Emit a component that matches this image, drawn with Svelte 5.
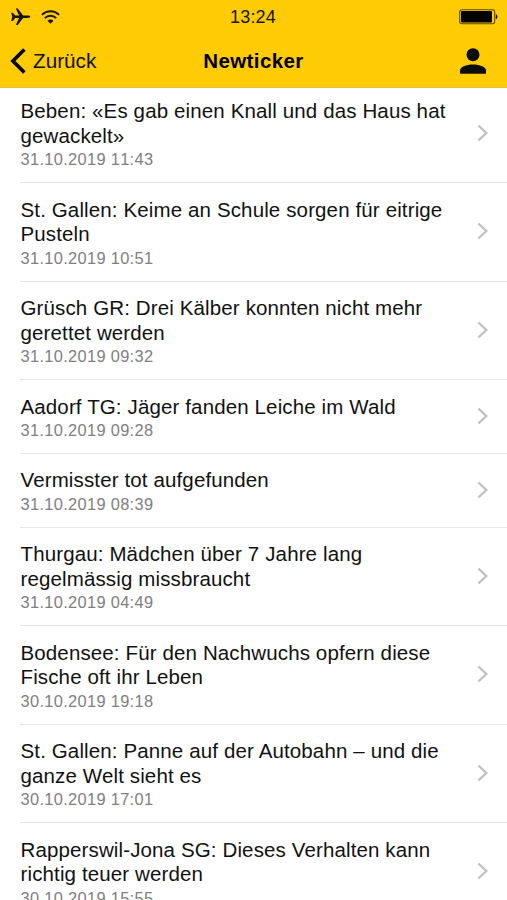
<script lang="ts">
interface NewsItem {
	lines: string[];
	date: string;
}

const items: NewsItem[] = [
	{ lines: ['Beben: «Es gab einen Knall und das Haus hat', 'gewackelt»'], date: '31.10.2019 11:43' },
	{ lines: ['St. Gallen: Keime an Schule sorgen für eitrige', 'Pusteln'], date: '31.10.2019 10:51' },
	{ lines: ['Grüsch GR: Drei Kälber konnten nicht mehr', 'gerettet werden'], date: '31.10.2019 09:32' },
	{ lines: ['Aadorf TG: Jäger fanden Leiche im Wald'], date: '31.10.2019 09:28' },
	{ lines: ['Vermisster tot aufgefunden'], date: '31.10.2019 08:39' },
	{ lines: ['Thurgau: Mädchen über 7 Jahre lang', 'regelmässig missbraucht'], date: '31.10.2019 04:49' },
	{ lines: ['Bodensee: Für den Nachwuchs opfern diese', 'Fische oft ihr Leben'], date: '30.10.2019 19:18' },
	{ lines: ['St. Gallen: Panne auf der Autobahn – und die', 'ganze Welt sieht es'], date: '30.10.2019 17:01' },
	{ lines: ['Rapperswil-Jona SG: Dieses Verhalten kann', 'richtig teuer werden'], date: '30.10.2019 15:55' }
];
</script>

<div class="screen">
	<header class="header">
		<div class="status">
			<div class="signals">
				<svg width="20" height="18" viewBox="0 0 20 18" fill="#1a1500">
					<path d="M0.2 4.7H1.8L4.2 7.6H8.1L4.8 0.5H6.8L12.1 7.6H16.5C18.1 7.6 19.3 8.1 19.3 8.8S18.1 10 16.5 10H12.1L6.8 17.1H4.8L8.1 10H4.2L1.8 12.9H0.2L1.3 8.8Z" />
				</svg>
				<svg width="19" height="14" viewBox="0 0 19 14" fill="none" stroke="#1a1500" stroke-width="1.9">
					<path d="M0.9 4.9C5.7 0 13.3 0 18.1 4.9" />
					<path d="M3.8 8.1C7 4.9 12 4.9 15.2 8.1" />
					<path d="M9.5 13.7L6.5 10.7C8.2 9.2 10.8 9.2 12.5 10.7Z" fill="#1a1500" stroke="none" />
				</svg>
			</div>
			<span class="clock">13:24</span>
			<svg class="battery" width="39" height="16" viewBox="0 0 39 16">
				<rect x="0.7" y="0.7" width="35" height="14" rx="2.2" fill="none" stroke="#5c4a00" stroke-width="1.1" />
				<rect x="2" y="2" width="31" height="11.4" rx="0.8" fill="#000" />
				<path d="M36.8 5.2C39 5.8 39 9.6 36.8 10.2Z" fill="#1a1500" />
			</svg>
		</div>
		<nav class="nav">
			<button class="back">
				<svg width="16" height="26" viewBox="0 0 16 26" fill="none" stroke="#000" stroke-width="3.6">
					<path d="M14.4 1.4L2.9 13L14.4 24.6" />
				</svg>
				<span>Zurück</span>
			</button>
			<h1 class="title">Newticker</h1>
			<button class="profile" aria-label="Profil">
				<svg width="26" height="26" viewBox="0 0 26 26" fill="#0d0d0d">
					<circle cx="13" cy="6.7" r="6.5" />
					<path d="M0 25.8V22.6C0 18.7 6.2 16.4 13 16.4S26 18.7 26 22.6V25.8Z" />
				</svg>
			</button>
		</nav>
	</header>

	<ul class="list">
		{#each items as item}
			<li class="item">
				<div class="text">
					<h2 class="headline">
						{#each item.lines as line}
							<span>{line}</span>
						{/each}
					</h2>
					<time class="date">{item.date}</time>
				</div>
				<svg class="chevron" width="12" height="18" viewBox="0 0 12 18" fill="none" stroke="#c2c2c4" stroke-width="2.4">
					<path d="M1.4 1.5L9.3 9L1.4 16.5" />
				</svg>
			</li>
		{/each}
	</ul>
</div>

<style>
	:global(body) {
		margin: 0;
		background: #fff;
	}

	.screen {
		height: 900px;
		overflow: hidden;
		background: #fff;
		font-family: 'Liberation Sans', Arial, sans-serif;
		color: #111;
	}

	.header {
		position: relative;
		z-index: 1;
		box-sizing: border-box;
		height: 88px;
		background: #ffcb05;
		border-bottom: 1px solid #e3c04a;
	}

	.status,
	.nav {
		display: grid;
		grid-template-columns: 1fr auto 1fr;
		align-items: center;
	}

	.status {
		height: 34px;
		padding: 0 9px 0 10px;
	}

	.signals {
		display: flex;
		align-items: center;
		gap: 10px;
		margin-left: 1px;
	}

	.clock {
		margin-right: 2px;
		font-size: 18px;
		letter-spacing: 0.2px;
		color: #1a1500;
	}

	.battery {
		justify-self: end;
	}

	.nav {
		height: 53px;
		padding: 0 10px;
	}

	button {
		display: flex;
		align-items: center;
		padding: 0;
		border: none;
		background: none;
		font: inherit;
		color: inherit;
		cursor: pointer;
	}

	.back {
		gap: 7px;
		font-size: 20.7px;
	}

	.title {
		margin: 0;
		font-size: 20.5px;
		font-weight: 700;
		letter-spacing: 0.4px;
		color: #000;
	}

	.profile {
		justify-self: end;
		margin-right: 11px;
	}

	.list {
		margin: -3px 0 0;
		padding: 0 0 0 20px;
		list-style: none;
	}

	.item {
		display: flex;
		align-items: center;
		justify-content: space-between;
		box-sizing: border-box;
		padding: 14.4px 18.5px 12.6px 0.5px;
		border-bottom: 1px solid #e6e6e8;
	}

	.headline {
		margin: 0;
		font-size: 20.5px;
		font-weight: 400;
		line-height: 24.5px;
		letter-spacing: 0.13px;
		white-space: nowrap;
	}

	.headline span {
		display: block;
	}

	.date {
		display: block;
		padding-top: 1px;
		font-size: 16.4px;
		line-height: 20.4px;
		letter-spacing: 0.33px;
		font-kerning: none;
		color: #808080;
	}

	.chevron {
		flex: none;
		margin-bottom: 3px;
	}
</style>
